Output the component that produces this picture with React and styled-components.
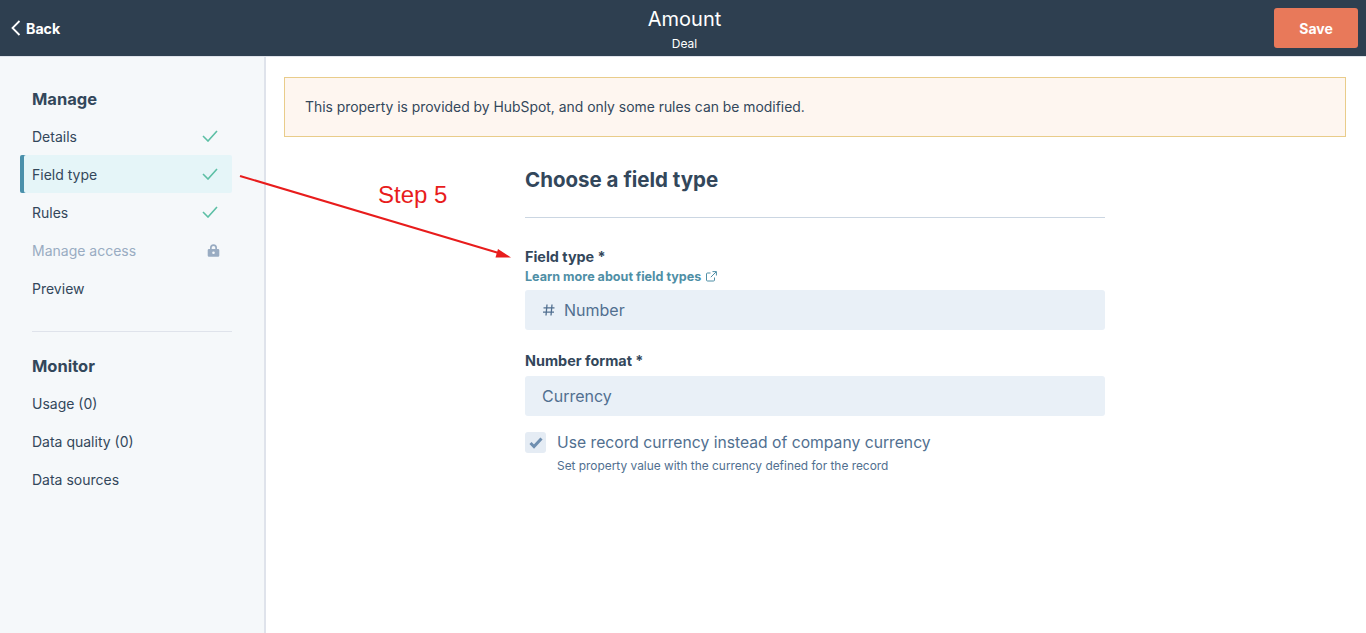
import React from "react";
import styled, { createGlobalStyle } from "styled-components";

const Global = createGlobalStyle`
  html, body { margin: 0; padding: 0; background: #fff; }
  body { font-family: Inter, "Open Sans", sans-serif; color: #33475b; }
`;
const Page = styled.div`
  position: relative; width: 1366px; height: 633px; overflow: hidden;
  display: flex; flex-direction: column;
`;
const Header = styled.header`
  height: 57px; flex: none; background: #2e3f50; color: #fff;
  display: grid; grid-template-columns: 1fr auto 1fr; align-items: center;
  padding: 0 8px 0 11px; box-sizing: border-box; border-bottom: 1px solid #dfe3eb;
`;
const BackLink = styled.a`
  display: flex; align-items: center; gap: 5px; font-size: 14.2px; font-weight: 700;
`;
const TitleBlock = styled.div`
  display: flex; flex-direction: column; align-items: center;
`;
const Title = styled.div`font-size: 20px; line-height: 30px;`;
const Subtitle = styled.div`font-size: 12px; line-height: 19px;`;
const SaveButton = styled.button`
  justify-self: end; width: 84px; height: 40px; border: 0; border-radius: 3px; background: #e8795a;
  color: #fff; font: 700 14px Inter, sans-serif;
`;
const Body = styled.div`flex: 1; display: flex; min-height: 0;`;
const Sidebar = styled.aside`
  width: 266px; flex: none; box-sizing: border-box; background: #f5f8fa; border-right: 2px solid #dfe3eb;
  padding: 29px 32px 0 20px;
`;
const SideHeading = styled.h3`
  margin: 0 0 5px 12px; font-size: 16.5px; line-height: 26px; font-weight: 700;
`;
const SideItem = styled.div`
  height: 38px; display: flex; align-items: center; justify-content: space-between; box-sizing: border-box;
  padding: 0 14px 0 12px; font-size: 14px; border-radius: 2px;
  color: ${p => (p.$muted ? "#99acc2" : "#33475b")};
  background: ${p => (p.$active ? "#e5f5f8" : "transparent")};
  box-shadow: ${p => (p.$active ? "inset 4px 0 0 #4a90ab" : "none")};
`;
const SideRule = styled.hr`
  margin: 24px 0 21px 12px; border: 0; border-top: 1px solid #dfe3eb;
`;
const LockIcon = styled.svg`margin-right: -2px;`;
const Main = styled.main`flex: 1; padding: 20px 20px 0 18px; min-width: 0;`;
const Notice = styled.div`
  height: 60px; box-sizing: border-box; background: #fef6f0; border: 1px solid #e9cc8a;
  padding: 0 20px 1px; display: flex; align-items: center; font-size: 13.9px;
`;
const Form = styled.section`width: 580px; margin: 28px 0 0 241px;`;
const FormTitle = styled.h2`
  margin: 0; font-size: 20.5px; line-height: 30px; font-weight: 700; padding-bottom: 22px;
  border-bottom: 1px solid #cbd6e2;
`;
const Label = styled.div`
  font-size: 14.4px; font-weight: 700; line-height: 20px;
`;
const FieldLabel = styled(Label)`margin-top: 29px;`;
const FormatLabel = styled(Label)`margin: 21px 0 5px;`;
const HelpLink = styled.a`
  display: flex; align-items: center; gap: 5px; height: 18px; margin: 0 0 5px;
  color: #4f8fa6; font-size: 12.6px; font-weight: 700;
`;
const ReadOnly = styled.div`
  height: 40px; background: #e9f0f7; border-radius: 3px; display: flex; align-items: center; gap: 8px;
  padding: 0 17px; font-size: 16px; color: #516f90;
`;
const CheckRow = styled.div`display: flex; gap: 11px; margin-top: 16px;`;
const CheckBox = styled.div`
  width: 21px; height: 21px; flex: none; border-radius: 3px; background: #e5ecf4;
  display: flex; align-items: center; justify-content: center;
`;
const CheckText = styled.div`display: flex; flex-direction: column; padding-top: 1px;`;
const CheckLabel = styled.div`font-size: 15.7px; line-height: 20px; color: #516f90;`;
const CheckHint = styled.div`font-size: 11.9px; line-height: 18px; margin-top: 4px; color: #516f90;`;
const Annotation = styled.svg`position: absolute; left: 0; top: 0; pointer-events: none;`;
const StepLabel = styled.div`
  position: absolute; left: 378px; top: 181px; font: 24px/28px "Liberation Sans", Arial, sans-serif; color: #e81c1c;
`;

const Check = () => (
  <svg width="16" height="12" viewBox="0 0 16 12" fill="none" stroke="#5cbfa5" strokeWidth="1.6">
    <path d="M1 6l5 5 9-10" />
  </svg>
);
const Lock = () => (
  <LockIcon width="13" height="13" viewBox="0 0 13 13">
    <path fill="#99acc2" fillRule="evenodd" d="M3 5V3.8a3.5 3.5 0 017 0V5h1a1.3 1.3 0 011.3 1.3v5.2A1.3 1.3 0 0111 12.8H2A1.3 1.3 0 01.7 11.5V6.300A1.3 1.3 0 012 5zm1.700 0h3.600V3.800a1.800 1.800 0 00-3.600 0zM6.500 7.500a1.300 1.300 0 100 2.600 1.300 1.300 0 000-2.600z" />
  </LockIcon>
);

export default function App() {
  return (
    <Page>
      <Global />
      <Header>
        <BackLink>
          <svg width="10" height="16" viewBox="0 0 10 16" fill="none" stroke="#fff" strokeWidth="1.800">
            <path d="M8.500 1L1.500 8l7 7" />
          </svg>
          Back
        </BackLink>
        <TitleBlock>
          <Title>Amount</Title>
          <Subtitle>Deal</Subtitle>
        </TitleBlock>
        <SaveButton>Save</SaveButton>
      </Header>
      <Body>
        <Sidebar>
          <SideHeading>Manage</SideHeading>
          <SideItem>Details<Check /></SideItem>
          <SideItem $active>Field type<Check /></SideItem>
          <SideItem>Rules<Check /></SideItem>
          <SideItem $muted>Manage access<Lock /></SideItem>
          <SideItem>Preview</SideItem>
          <SideRule />
          <SideHeading>Monitor</SideHeading>
          <SideItem>Usage (0)</SideItem>
          <SideItem>Data quality (0)</SideItem>
          <SideItem>Data sources</SideItem>
        </Sidebar>
        <Main>
          <Notice>This property is provided by HubSpot, and only some rules can be modified.</Notice>
          <Form>
            <FormTitle>Choose a field type</FormTitle>
            <FieldLabel>Field type *</FieldLabel>
            <HelpLink>
              Learn more about field types
              <svg width="11" height="11" viewBox="0 0 11 11" fill="none" stroke="#4f8fa6" strokeWidth="1">
                <path d="M4.500 2H1.500a1 1 0 00-1 1v6a1 1 0 001 1h6a1 1 0 001-1V6.500M6.500.6h3.900v3.900M10.200.8L4.800 6.200" />
              </svg>
            </HelpLink>
            <ReadOnly>
              <svg width="14" height="14" viewBox="0 0 14 14" fill="none" stroke="#516f90" strokeWidth="1.300">
                <path d="M5 1.500L4 12.500M10 1.500L9 12.500M1.500 4.800h11M1 9.200h11" />
              </svg>
              Number
            </ReadOnly>
            <FormatLabel>Number format *</FormatLabel>
            <ReadOnly>Currency</ReadOnly>
            <CheckRow>
              <CheckBox>
                <svg width="14" height="12" viewBox="0 0 14 12" fill="none" stroke="#6f8fb0" strokeWidth="3">
                  <path d="M1.500 6l3.500 3.500 7.500-8" />
                </svg>
              </CheckBox>
              <CheckText>
                <CheckLabel>Use record currency instead of company currency</CheckLabel>
                <CheckHint>Set property value with the currency defined for the record</CheckHint>
              </CheckText>
            </CheckRow>
          </Form>
        </Main>
      </Body>
      <Annotation width="1366" height="633" viewBox="0 0 1366 633">
        <path d="M240 176L502 254" stroke="#e81c1c" strokeWidth="2" fill="none" />
        <path d="M511 257.500L498 249L495.500 257.500z" fill="#e81c1c" />
      </Annotation>
      <StepLabel>Step 5</StepLabel>
    </Page>
  );
}
